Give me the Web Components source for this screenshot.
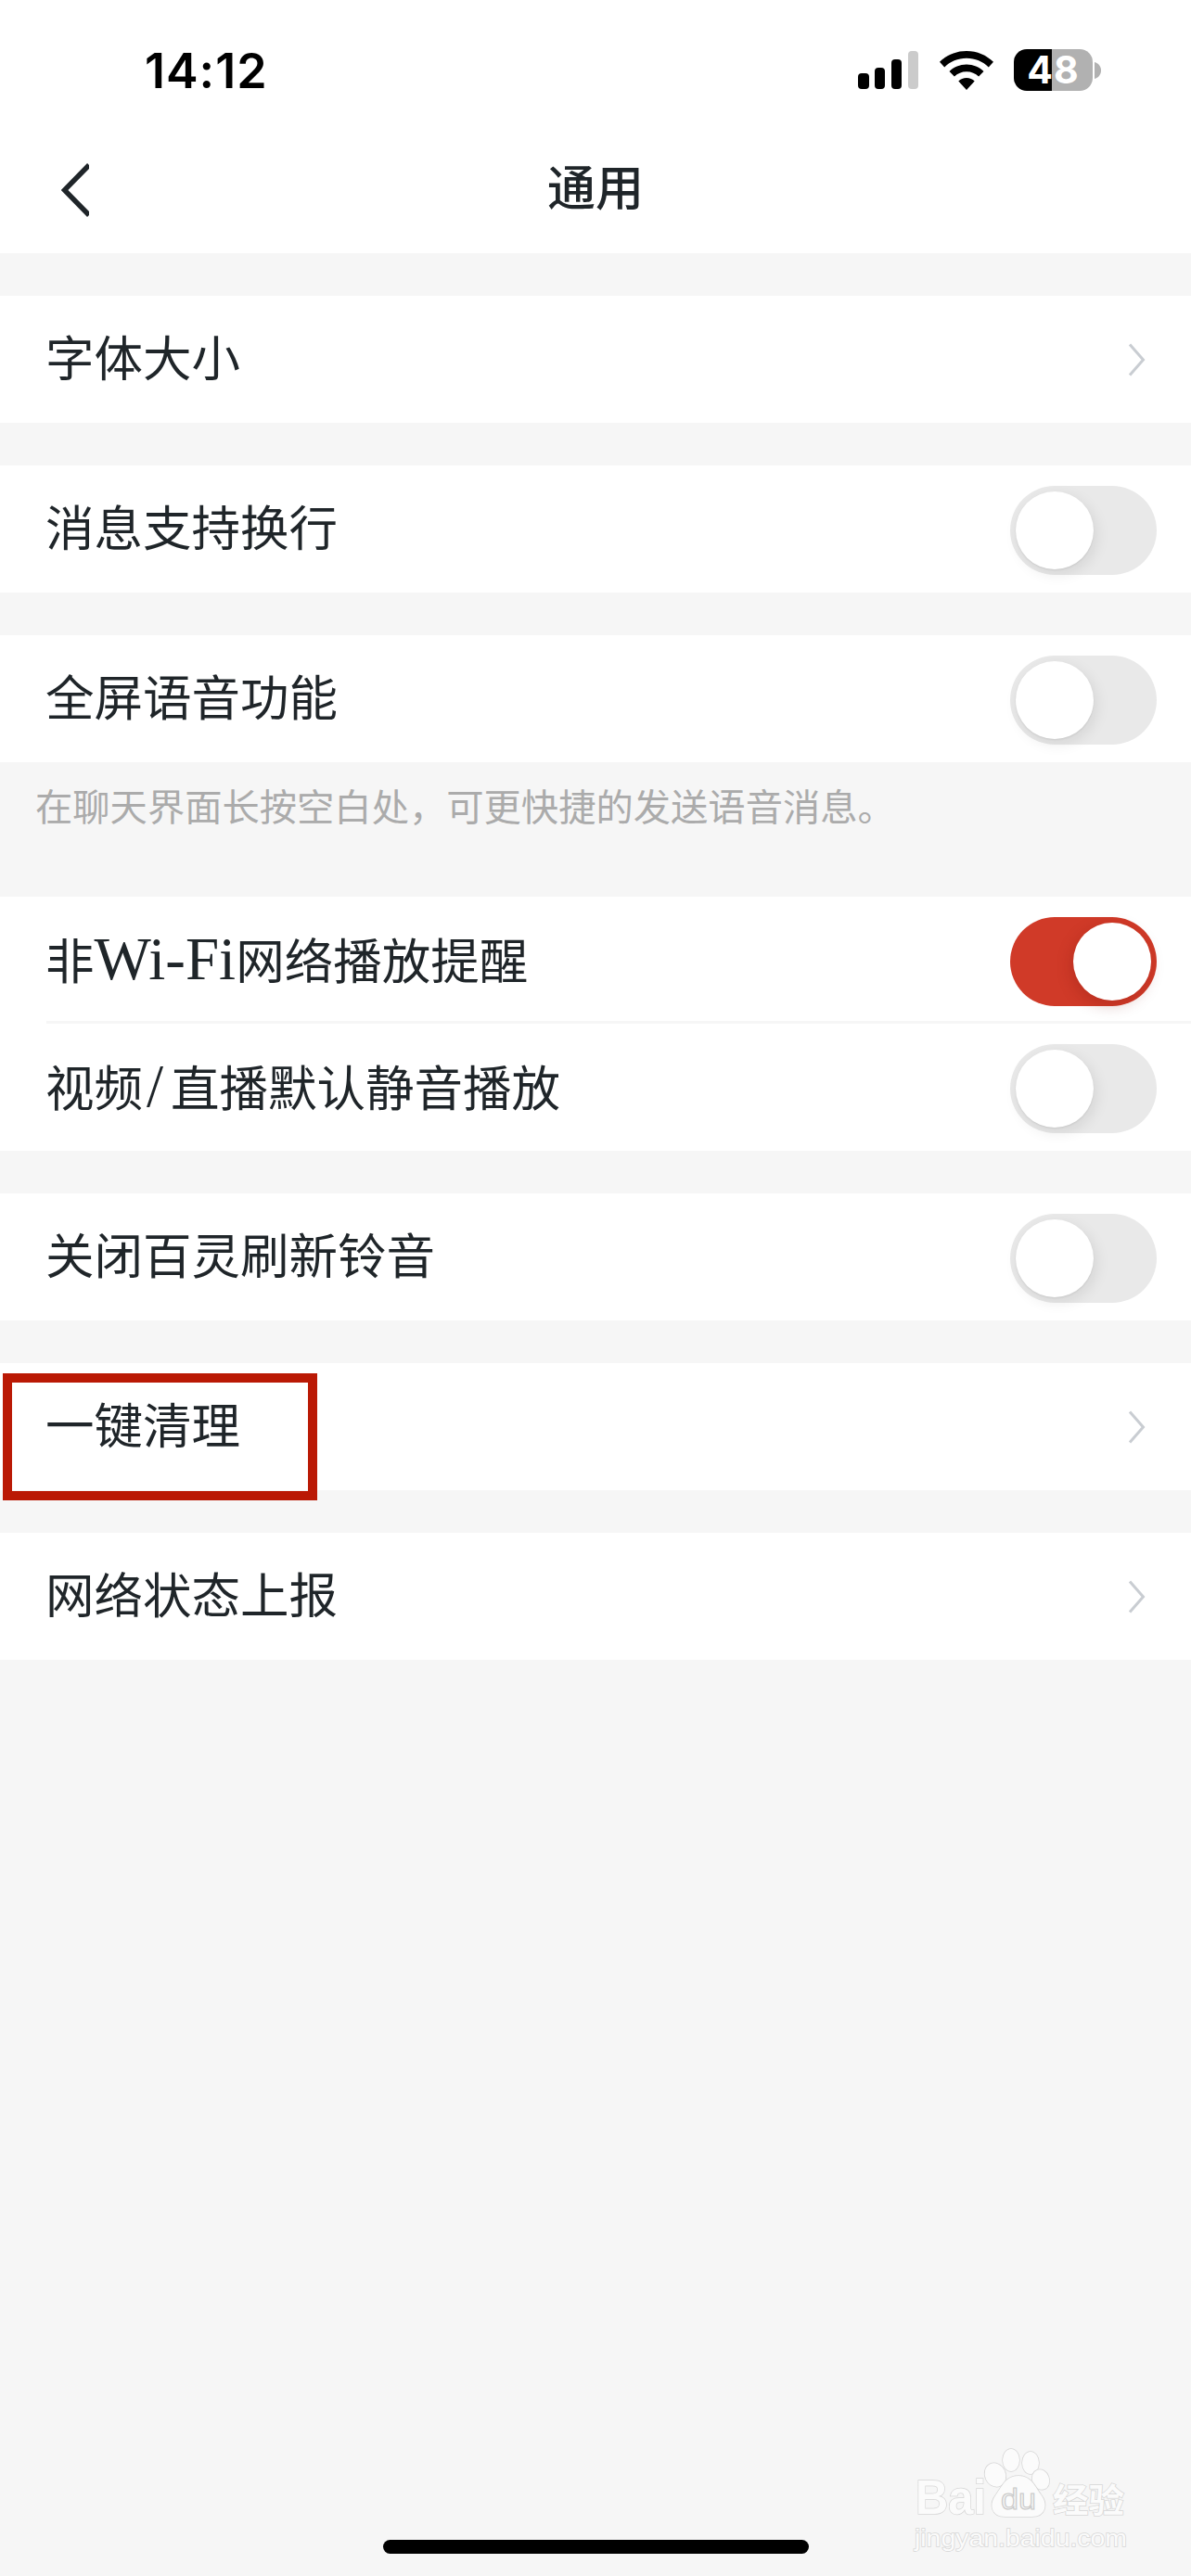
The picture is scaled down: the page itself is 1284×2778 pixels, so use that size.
<!DOCTYPE html>
<html lang="zh-CN">
<head>
<meta charset="utf-8">
<title>通用</title>
<style>
   html, body { margin: 0; padding: 0; background: #f6f6f6; }
   body { font-family: "Liberation Serif", "Noto Sans CJK SC", serif; color: #1f2529; }
   /* latin letters in the row labels run much larger than the CJK around them */
   .latin { font-size: 65px; }
   .slash { font-size: 65px; letter-spacing: 8px; margin-left: 4px; }
</style>
</head>
<body>
<settings-page>
   <status-bar slot="top" time="14:12" battery="48"></status-bar>
   <nav-bar slot="top">通用</nav-bar>

   <setting-row>字体大小</setting-row>
   <setting-row toggle>消息支持换行</setting-row>
   <setting-group>
      <setting-row toggle>全屏语音功能</setting-row>
      <setting-hint>在聊天界面长按空白处，可更快捷的发送语音消息。</setting-hint>
   </setting-group>
   <setting-group>
      <setting-row toggle on divided>非<span class="latin">Wi-Fi</span>网络播放提醒</setting-row>
      <setting-row toggle>视频<span class="slash">/</span>直播默认静音播放</setting-row>
   </setting-group>
   <setting-row toggle>关闭百灵刷新铃音</setting-row>
   <setting-row>一键清理</setting-row>
   <setting-row>网络状态上报</setting-row>

   <mark-box slot="over"></mark-box>
   <baidu-watermark slot="over"></baidu-watermark>
</settings-page>

<script>
// page shell: header on white, list of rows, home bar at the bottom
class SettingsPage extends HTMLElement {
   constructor() {
      super();
      this.attachShadow({ mode: "open" }).innerHTML = `
         <style>
            :host {
               display: flex;
               flex-direction: column;
               position: relative;
               height: 2778px;
               overflow: hidden;
               background: #f6f6f6;
            }
            header { background: #fff; }
            main {
               display: flex;
               flex-direction: column;
               gap: 46px;
               padding-top: 46px;
            }
            #home {
               width: 459px;
               height: 15px;
               margin: auto auto 24px;
               border-radius: 8px;
               background: #000;
            }
         </style>
         <header><slot name="top"></slot></header>
         <main><slot></slot></main>
         <div id="home"></div>
         <slot name="over"></slot>
      `;
   }
}

class StatusBar extends HTMLElement {
   constructor() {
      super();
      const time = this.getAttribute("time");
      const battery = this.getAttribute("battery");
      this.attachShadow({ mode: "open" }).innerHTML = `
         <style>
            :host {
               display: flex;
               align-items: center;
               justify-content: space-between;
               height: 151px;
               padding: 0 97px 0 156px;
               color: #000;
            }
            #time {
               font: 600 52px/60px Inter, "Liberation Sans", sans-serif;
               letter-spacing: 1px;
               margin-top: 2px;
            }
            #icons { display: flex; align-items: center; }
            #signal { margin-right: 23px; }
            #wifi { margin-right: 22px; }
            #batt {
               position: relative;
               display: flex;
               align-items: center;
               justify-content: center;
               width: 85px;
               height: 45px;
               border-radius: 14px;
               background: linear-gradient(90deg, #000 41px, #b1b1b1 41px);
               color: #fff;
               font: 700 41px/45px Inter, "Liberation Sans", sans-serif;
               letter-spacing: 1px;
            }
            #tip { margin-left: 2px; }
         </style>
         <span id="time">${time}</span>
         <div id="icons">
            <svg id="signal" width="65" height="41" viewBox="0 0 65 41">
               <rect x="0" y="24" width="12" height="17" rx="4"/>
               <rect x="18" y="18" width="11" height="23" rx="4"/>
               <rect x="36" y="9" width="11" height="32" rx="4"/>
               <rect x="54" y="0" width="11" height="41" rx="4" fill="#cbcbcb"/>
            </svg>
            <svg id="wifi" width="58" height="42" viewBox="0 0 58 42">
               <path d="M29 0C40.500 0 50.500 4.500 58 11.800L52.800 17.400C46.600 11.300 38.300 7.700 29 7.700S11.400 11.300 5.200 17.400L0 11.800C7.500 4.500 17.500 0 29 0Z"/>
               <path d="M29 14.500C36.300 14.500 42.700 17.300 47.500 21.900L42.100 27.500C38.700 24.200 34.100 22.200 29 22.200S19.300 24.200 15.900 27.500L10.500 21.900C15.300 17.300 21.700 14.500 29 14.500Z"/>
               <path d="M29 29C32.500 29 35.500 30.300 37.700 32.400L29 42L20.300 32.400C22.500 30.300 25.500 29 29 29Z"/>
            </svg>
            <div id="batt">${battery}</div>
            <svg id="tip" width="7" height="18" viewBox="0 0 7 18">
               <path d="M0 0C4 1 7 4.500 7 9S4 17 0 18Z" fill="#b1b1b1"/>
            </svg>
         </div>
      `;
   }
}

class NavBar extends HTMLElement {
   constructor() {
      super();
      this.attachShadow({ mode: "open" }).innerHTML = `
         <style>
            :host {
               display: grid;
               grid-template-columns: 1fr auto 1fr;
               align-items: center;
               height: 122px;
               box-sizing: border-box;
               padding-bottom: 14px;
            }
            svg { display: block; margin-left: 66px; }
            #title {
               font: 500 52px/60px "Noto Sans CJK SC", sans-serif;
               color: #1f2529;
               margin-bottom: 10px;
            }
         </style>
         <svg width="30" height="58" viewBox="0 0 30 58">
            <path d="M30 2L3.500 29L30 56" fill="none" stroke="#1f2529" stroke-width="5.500"/>
         </svg>
         <div id="title"><slot></slot></div>
         <div></div>
      `;
   }
}

class SettingGroup extends HTMLElement {
   constructor() {
      super();
      this.attachShadow({ mode: "open" }).innerHTML = `
         <style>:host { display: block; }</style>
         <slot></slot>
      `;
   }
}

// one row: label on the left, a toggle or a chevron on the right
class SettingRow extends HTMLElement {
   constructor() {
      super();
      const right = this.hasAttribute("toggle")
         ? `<setting-toggle ${this.hasAttribute("on") ? "on" : ""}></setting-toggle>`
         : `<svg width="19" height="36" viewBox="0 0 19 36"><path d="M2 1.500L16.500 18L2 34.500" fill="none" stroke="#c9cdd2" stroke-width="3"/></svg>`;
      this.attachShadow({ mode: "open" }).innerHTML = `
         <style>
            :host {
               display: flex;
               align-items: center;
               justify-content: space-between;
               box-sizing: border-box;
               height: 137px;
               padding: 2px 37px 0 49px;
               background: #fff;
               font-size: 52.500px;
               line-height: 60px;
            }
            :host(:not([toggle])) { padding-right: 49px; }
            span, svg { margin-bottom: 2px; }
            #rule {
               position: absolute;
               left: 50px;
               right: 0;
               bottom: 0;
               height: 3px;
               background: #f6f6f6;
               display: none;
            }
            :host([divided]) { position: relative; }
            :host([divided]) #rule { display: block; }
         </style>
         <span><slot></slot></span>
         ${right}
         <div id="rule"></div>
      `;
   }
}

class SettingToggle extends HTMLElement {
   constructor() {
      super();
      this.attachShadow({ mode: "open" }).innerHTML = `
         <style>
            :host {
               display: flex;
               align-items: center;
               box-sizing: border-box;
               width: 158px;
               height: 96px;
               padding: 6px;
               border-radius: 48px;
               background: #e9e9e9;
            }
            :host([on]) {
               justify-content: flex-end;
               background: #d03a28;
            }
            #knob {
               width: 84px;
               height: 84px;
               border-radius: 50%;
               background: #fff;
               box-shadow: 3px 5px 16px rgba(0, 0, 0, 0.09), 0 1px 2px rgba(0, 0, 0, 0.08);
            }
            :host([on]) #knob { box-shadow: -2px 5px 16px rgba(120, 20, 10, 0.25); }
         </style>
         <div id="knob"></div>
      `;
   }
}

class SettingHint extends HTMLElement {
   constructor() {
      super();
      this.attachShadow({ mode: "open" }).innerHTML = `
         <style>
            :host {
               display: block;
               height: 99px;
               box-sizing: border-box;
               padding: 26px 0 0 38px;
               font-size: 40.300px;
               line-height: 48px;
               color: #ababab;
            }
         </style>
         <slot></slot>
      `;
   }
}

// red annotation rectangle drawn over the "一键清理" row
class MarkBox extends HTMLElement {
   constructor() {
      super();
      this.attachShadow({ mode: "open" }).innerHTML = `
         <style>
            :host {
               position: absolute;
               left: 3px;
               top: 1481px;
               width: 339px;
               height: 137px;
               box-sizing: border-box;
               border: 10px solid #ba1905;
            }
         </style>
      `;
   }
}

class BaiduWatermark extends HTMLElement {
   constructor() {
      super();
      this.attachShadow({ mode: "open" }).innerHTML = `
         <style>
            :host { position: absolute; right: 0; bottom: 0; width: 384px; height: 158px; }
            svg { display: block; }
            .w { fill: #fbfbfb; stroke: #d6d6d6; stroke-width: 1.500; paint-order: stroke; }
            text { font-family: "Liberation Sans", sans-serif; }
         </style>
         <svg width="384" height="158" viewBox="0 0 384 158">
            <g class="w">
               <ellipse cx="173" cy="49" rx="11" ry="13" transform="rotate(-25 173 49)"/>
               <ellipse cx="190" cy="33" rx="9" ry="12"/>
               <ellipse cx="211" cy="36" rx="9" ry="12"/>
               <ellipse cx="222" cy="54" rx="9" ry="11" transform="rotate(-20 222 54)"/>
               <path d="M198 50C212 50 216 62 222 70C230 80 228 94 212 94H184C168 94 166 80 174 70C180 62 184 50 198 50Z"/>
               <text x="87" y="91" font-size="52" font-weight="700" textLength="76" lengthAdjust="spacingAndGlyphs">Bai</text>
               <text x="235" y="90" font-size="36" font-weight="700" textLength="77" lengthAdjust="spacingAndGlyphs" style="font-family:'Noto Sans CJK SC',sans-serif">经验</text>
               <text x="86" y="126" font-size="26" textLength="229" lengthAdjust="spacingAndGlyphs">jingyan.baidu.com</text>
            </g>
            <text x="179" y="86" font-size="31" fill="#f2f2f2" stroke="#c8c8c8" stroke-width="1" textLength="38" lengthAdjust="spacingAndGlyphs">du</text>
         </svg>
      `;
   }
}

customElements.define("setting-toggle", SettingToggle);
customElements.define("setting-row", SettingRow);
customElements.define("setting-hint", SettingHint);
customElements.define("setting-group", SettingGroup);
customElements.define("status-bar", StatusBar);
customElements.define("nav-bar", NavBar);
customElements.define("mark-box", MarkBox);
customElements.define("baidu-watermark", BaiduWatermark);
customElements.define("settings-page", SettingsPage);
</script>
</body>
</html>
